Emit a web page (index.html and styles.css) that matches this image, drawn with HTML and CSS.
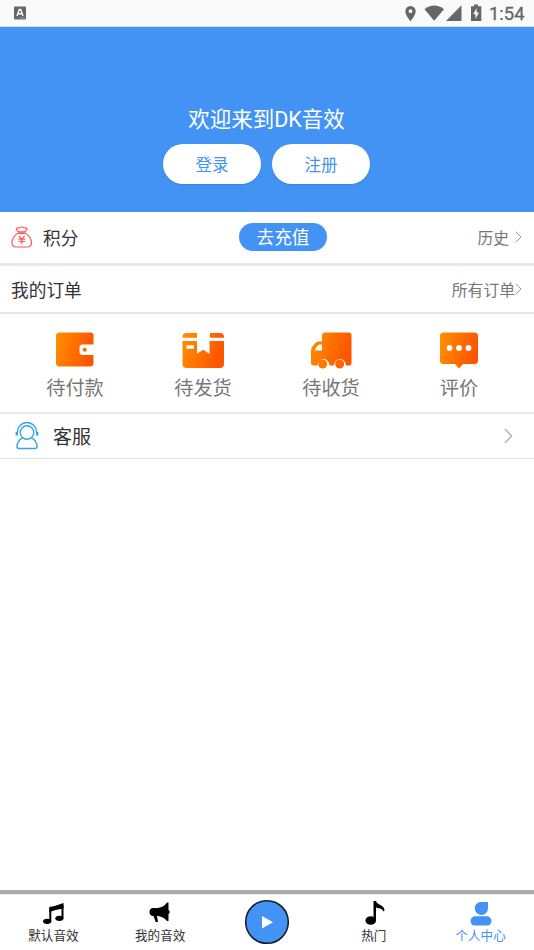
FILE: index.html
```
<!DOCTYPE html>
<html lang="zh-CN">
<head>
<meta charset="utf-8">
<title>个人中心</title>
<link rel="stylesheet" href="styles.css">
</head>
<body>
<div class="screen">
  <header class="status">
    <svg class="status-app" viewBox="0 0 12 14"><rect y=".5" width="12" height="13" rx="1" fill="#666"/><path d="M3 10 5.300 3.500h1.400L9 10M4 7.800h4" fill="none" stroke="#fff" stroke-width="1.400"/><path d="M6.500 12h4" stroke="#ccc" stroke-dasharray="1 .6"/></svg>
    <svg class="status-icons" viewBox="404 4 80 18" fill="#666">
      <path fill-rule="evenodd" d="M410.500 6a5.200 5.200 0 0 0-5.200 5.200c0 3.900 5.200 10 5.200 10s5.200-6.100 5.200-10a5.200 5.200 0 0 0-5.200-5.200zm0 3.300a1.900 1.900 0 1 1 0 3.800 1.900 1.900 0 0 1 0-3.800z"/>
      <path d="M424.500 9.200c5.500-5 14-5 19.500 0L434.200 20.800z"/>
      <path d="M461.500 5.200V21H446z"/>
      <path fill-rule="evenodd" d="M474 4.500h4v1.700h3.300V21H471V6.200h3zm2.700 3.500-3.500 6.200h2.300V19l3.500-6.500h-2.300z"/>
    </svg>
    <span class="clock">1:54</span>
  </header>

  <section class="hero">
    <h1>欢迎来到DK音效</h1>
    <div class="actions"><button>登录</button><button>注册</button></div>
  </section>

  <section class="row points">
    <svg class="bag" viewBox="0 0 22 22" fill="none" stroke="#f9575c" stroke-width="1.200" stroke-linejoin="round"><path d="M7.300 5.900 5.200 3.200C5.500 1.500 7.200 1.500 8 2.200c.8-1.600 4.500-1.600 5.300 0 .9-.7 2.500-.7 2.800 1l-2.100 2.700zM7.300 7.300h6.700M7.300 7.300C4 8.600 1 12.800 1 16.500 1 19.500 2.300 21 5 21h11.500c2.700 0 4-1.500 4-4.500 0-3.700-3.200-7.900-6.500-9.200M8 9.800l2.800 3.400 2.800-3.400M10.800 13v5M7.500 13.200h6.600M7.500 15.500h6.600"/></svg>
    <span class="label">积分</span>
    <button class="recharge">去充值</button>
    <span class="more">历史</span>
    <svg class="chevron" viewBox="0 0 7 12"><path d="M.7.700 6 6 .7 11.300"/></svg>
  </section>

  <section class="row orders-head">
    <span class="label">我的订单</span>
    <span class="more">所有订单</span>
    <svg class="chevron" viewBox="0 0 7 12"><path d="M.7.700 6 6 .7 11.300"/></svg>
  </section>

  <section class="orders">
    <svg class="defs"><defs><linearGradient id="orange" x2="1" y2=".25"><stop stop-color="#ff9100"/><stop offset="1" stop-color="#ff5500"/></linearGradient></defs></svg>
    <div class="order">
      <svg viewBox="0 0 44 38"><path fill="url(#orange)" d="M6.500.5h31q3 0 3 3v9H29.500q-3 0-3 3v4.500q0 3 3 3h11V31q0 3.500-3.500 3.500H6.500Q3 34.500 3 31V4Q3 .5 6.500.5z"/><circle cx="31.700" cy="17.700" r="2" fill="#ff6a00"/></svg>
      <span>待付款</span>
    </div>
    <div class="order">
      <svg viewBox="0 0 44 38"><path fill="url(#orange)" fill-rule="evenodd" d="M5.500 1H16v4.800H1.500V5Q1.500 1 5.500 1zM29 1h10q4 0 4 4v.8H29zM1.500 9H16v12.800l6.300-4L28.500 22V9H43v23q0 4-4 4H5.500q-4 0-4-4zM5.500 13.200v3.500h7.500v-3.500z"/></svg>
      <span>待发货</span>
    </div>
    <div class="order">
      <svg viewBox="0 0 44 38"><path fill="url(#orange)" fill-rule="evenodd" d="M16 .5h23.500q3 0 3 3V31q0 2.500-2.500 2.500h-3a6 6.500 0 0 0-12 0h-4.500a6 6.500 0 0 0-12 0H5Q2 33.500 2 31V18.500Q2 16.500 3 15L6.500 10.700Q8 9.500 10 9.500h3V3.500Q13 .5 16 .5zM13 12.500h-2.500Q8.500 12.500 5.500 18.500H13z"/><circle cx="13.700" cy="32" r="4.500" fill="#ff7900"/><circle cx="30.700" cy="32" r="4.500" fill="#ff6500"/></svg>
      <span>待收货</span>
    </div>
    <div class="order">
      <svg viewBox="0 0 44 38"><path fill="url(#orange)" d="M6.500.5H37.500Q41 .5 41 4v24.500Q41 32 37.500 32H26l-4 4.500L18 32H6.500Q3 32 3 28.500V4Q3 .5 6.500.5z"/><g fill="#fff"><circle cx="12.500" cy="16" r="2.900"/><circle cx="22" cy="16" r="2.900"/><circle cx="31.500" cy="16" r="2.900"/></g></svg>
      <span>评价</span>
    </div>
  </section>

  <section class="row service">
    <svg class="agent" viewBox="0 0 24 28" fill="none" stroke="#36a5e2" stroke-width="1.400"><circle cx="12" cy="10.500" r="6.800"/><path d="M2.500 10a9.500 9.500 0 0 1 19 0M7.500 15.800C3.500 18 2 21.500 2 24.500q0 2 2 2h16q2 0 2-2c0-3-1.500-6.500-5.500-8.700"/><path stroke-width="2.400" d="M1.800 9.700v3.800M22.200 9.700v3.800"/></svg>
    <span class="label">客服</span>
    <svg class="arrow" viewBox="0 0 9 16"><path d="M1 1l6.500 7L1 15"/></svg>
  </section>

  <main class="blank"></main>

  <nav class="tabs">
    <a class="tab"><svg viewBox="0 0 24 28"><path d="M8.300 8Q15 7 22.500 4v5.500Q16 10 8.300 13z"/><path d="M9.300 9v13M21.500 6v13" fill="none" stroke="#000" stroke-width="2"/><ellipse cx="6.200" cy="22.300" rx="4.100" ry="2.600"/><ellipse cx="18.400" cy="19.300" rx="4.100" ry="2.600"/></svg><span>默认音效</span></a>
    <a class="tab"><svg viewBox="0 0 24 28"><path d="M4.500 9H10Q16 8 19 3.500h1.500V11q2.500 2 0 4v7H19Q16 18 10 17H9l1 6H7.700L5.500 17H4.500Q1.500 16.500 1.500 13T4.500 9z"/></svg><span>我的音效</span></a>
    <a class="tab play"><svg viewBox="0 0 46 46"><circle cx="23" cy="23" r="21.300" fill="#4393f5" stroke="#14202e" stroke-width="1.600"/><path fill="#fff" d="M18 17v12.500L29 23.300z"/></svg></a>
    <a class="tab"><svg viewBox="0 0 24 28"><path d="M11.500 2H14c.5 4 8.500 3.500 8.500 9.500l-1 1C20 9 16 9.500 14 8.500v13H11.500z"/><ellipse cx="8.700" cy="21.500" rx="5.300" ry="4.300"/></svg><span>热门</span></a>
    <a class="tab active"><svg viewBox="0 0 24 28"><path d="M12.200 3H19v6.300A6.600 6.600 0 0 1 12.400 16 6.600 6.600 0 0 1 5.800 9.400C5.800 5.500 8.500 3 12.200 3z"/><rect x="1.500" y="17.300" width="21" height="9.200" rx="4.600"/></svg><span>个人中心</span></a>
  </nav>
</div>
</body>
</html>
```
FILE: styles.css
```
* { box-sizing: border-box; }
body {
  margin: 0;
  background: #fff;
  color: #333;
  font-family: Roboto, "Noto Sans CJK SC", sans-serif;
}
svg { display: block; flex: none; }
button {
  border: 0;
  padding: 0;
  font-family: inherit;
}
.screen {
  width: 534px;
  height: 950px;
  display: flex;
  flex-direction: column;
  overflow: hidden;
}
.status {
  height: 27px;
  flex: none;
  display: flex;
  align-items: center;
  padding: 0 9px 0 14px;
  background: #fafafa;
  border-bottom: 1px solid #d5e2f2;
}
.status-app { width: 12px; height: 14px; }
.status-icons { width: 80px; height: 18px; margin-left: auto; }
.clock {
  width: 36px;
  margin-left: 5px;
  padding-top: 1px;
  color: #666;
  font-size: 18.400px;
  -webkit-text-stroke: .3px #666;
  line-height: 26px;
  white-space: nowrap;
}
.hero {
  height: 185px;
  flex: none;
  display: flex;
  flex-direction: column;
  align-items: center;
  padding: 77px 1px 0 0;
  background: #4393f5;
}
h1 {
  margin: 0;
  color: #fff;
  font-size: 21.500px;
  font-weight: 400;
  line-height: 32px;
}
.actions { display: flex; gap: 11px; margin-top: 8px; }
.actions button {
  width: 98px;
  height: 40px;
  padding-top: 3px;
  border-radius: 20px;
  background: #fff;
  color: #4393f5;
  font-size: 16.500px;
  line-height: 37px;
  box-shadow: 0 1px 2px rgba(0, 0, 0, .12);
}
.row { display: flex; align-items: center; flex: none; }
.label { font-size: 17.700px; }
.more { margin-left: auto; color: #777; font-size: 15.800px; }
.chevron {
  width: 7px;
  height: 12px;
  fill: none;
  stroke: #999;
}
.points {
  height: 54px;
  padding: 0 12px 2px 11px;
  border-bottom: 3px solid #e8e8e8;
}
.bag { width: 22px; height: 22px; margin-right: 10px; }
.points .label { width: 196px; }
.points .more { padding-top: 2px; }
.recharge {
  width: 88px;
  height: 28px;
  padding-top: 2px;
  border-radius: 14px;
  background: #4393f5;
  color: #fff;
  font-size: 17.700px;
  line-height: 26px;
}
.points .chevron { margin-left: 6px; }
.orders-head {
  height: 48px;
  padding: 0 12px 0 11px;
  border-bottom: 2px solid #e6e6e6;
}
.orders-head .more { padding-top: 1px; }
.orders {
  height: 100px;
  flex: none;
  display: grid;
  grid-template-columns: repeat(4, 1fr);
  padding: 18px 11px 0;
  border-bottom: 2px solid #e8e8e8;
  position: relative;
}
.defs { position: absolute; width: 0; height: 0; }
.order {
  display: flex;
  flex-direction: column;
  align-items: center;
  color: #777;
  font-size: 19.200px;
  line-height: 28px;
}
.order svg { width: 44px; height: 38px; margin-bottom: 5px; }
.service {
  height: 45px;
  padding: 0 21px 0 15px;
  border-bottom: 1px solid #e2e2e2;
}
.agent { width: 24px; height: 28px; margin-right: 14px; }
.service .label { padding-bottom: 2px; font-size: 19px; }
.arrow {
  width: 9px;
  height: 16px;
  margin-left: auto;
  fill: none;
  stroke: #b5b5b5;
  stroke-width: 1.600;
}
.blank { flex: 1; }
.tabs {
  height: 60px;
  flex: none;
  display: grid;
  grid-template-columns: repeat(5, 1fr);
  border-top: 4px solid #a9a9a9;
  box-shadow: inset 0 1px #eee;
}
.tab {
  display: flex;
  flex-direction: column;
  align-items: center;
  padding-top: 5px;
  color: #333;
  font-size: 12.600px;
  line-height: 18px;
}
.tab svg { width: 24px; height: 28px; }
.tab.play svg { width: 46px; height: 46px; }
.tab.active { color: #4393f5; fill: #4393f5; }
```
